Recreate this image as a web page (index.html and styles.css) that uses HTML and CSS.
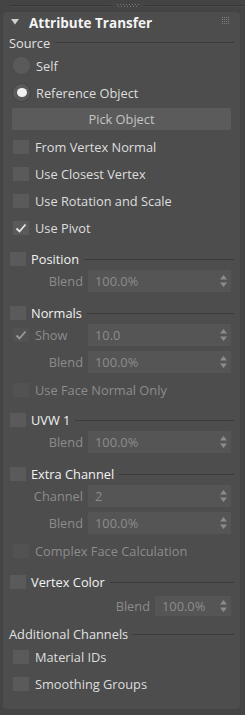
FILE: index.html
```html
<!DOCTYPE html>
<html>
<head>
<meta charset="utf-8">
<link rel="stylesheet" href="styles.css">
</head>
<body>
<div class="topbar">
  <div class="tline"></div>
  <svg class="grip" width="22" height="4" viewBox="0 0 22 4">
    <g fill="#7a7a7a">
      <rect x="0" y="0" width="1" height="1"/><rect x="3" y="0" width="1" height="1"/><rect x="6" y="0" width="1" height="1"/><rect x="9" y="0" width="1" height="1"/><rect x="12" y="0" width="1" height="1"/><rect x="15" y="0" width="1" height="1"/><rect x="18" y="0" width="1" height="1"/><rect x="21" y="0" width="1" height="1"/>
      <rect x="1" y="2" width="1" height="1"/><rect x="4" y="2" width="1" height="1"/><rect x="7" y="2" width="1" height="1"/><rect x="10" y="2" width="1" height="1"/><rect x="13" y="2" width="1" height="1"/><rect x="16" y="2" width="1" height="1"/><rect x="19" y="2" width="1" height="1"/>
    </g>
  </svg>
  <div class="tline"></div>
</div>

<div class="panel">
  <div class="rhead">
    <svg class="tri" width="8" height="6" viewBox="0 0 8 6"><path d="M0 0H8L4 5.5Z" fill="#cfcfcf"/></svg>
    <span class="rtitle">Attribute Transfer</span>
    <svg class="gridicon" width="8" height="8" viewBox="0 0 8 8">
      <g fill="#7c7c7c">
        <rect x="0" y="0" width="1" height="1"/><rect x="2" y="0" width="1" height="1"/><rect x="4" y="0" width="1" height="1"/><rect x="6" y="0" width="1" height="1"/>
        <rect x="0" y="2" width="1" height="1"/><rect x="2" y="2" width="1" height="1"/><rect x="4" y="2" width="1" height="1"/><rect x="6" y="2" width="1" height="1"/>
        <rect x="0" y="4" width="1" height="1"/><rect x="2" y="4" width="1" height="1"/><rect x="4" y="4" width="1" height="1"/><rect x="6" y="4" width="1" height="1"/>
        <rect x="0" y="6" width="1" height="1"/><rect x="2" y="6" width="1" height="1"/><rect x="4" y="6" width="1" height="1"/><rect x="6" y="6" width="1" height="1"/>
      </g>
    </svg>
  </div>

  <div class="gtitle"><span>Source</span><i class="rule"></i></div>
  <div class="row"><span class="radio"></span><span class="lbl">Self</span></div>
  <div class="row"><span class="radio on"></span><span class="lbl">Reference Object</span></div>
  <div class="btn">Pick Object</div>
  <div class="row first"><span class="cb"></span><span class="lbl">From Vertex Normal</span></div>
  <div class="row"><span class="cb"></span><span class="lbl">Use Closest Vertex</span></div>
  <div class="row"><span class="cb"></span><span class="lbl">Use Rotation and Scale</span></div>
  <div class="row"><span class="cb"><svg width="12" height="10" viewBox="0 0 12 10"><path d="M1.5 5.5L4.5 8.5L10.5 1.5" fill="none" stroke="#e6e6e6" stroke-width="1.8"/></svg></span><span class="lbl">Use Pivot</span></div>

  <div class="sect m8">
    <div class="stitle"><span class="cb"></span><span class="st">Position</span><i class="rule"></i></div>
    <div class="srow"><span class="slbl">Blend</span><div class="spin"><span>100.0%</span><svg class="arr" width="7" height="12" viewBox="0 0 7 12"><path d="M3.5 0L7 4.5H0Z M3.5 12L7 7.5H0Z" fill="#8c8c8c"/></svg></div></div>
  </div>

  <div class="sect m11">
    <div class="stitle"><span class="cb"></span><span class="st">Normals</span><i class="rule"></i></div>
    <div class="srow"><span class="slbl left"><span class="cb dis"><svg width="12" height="10" viewBox="0 0 12 10"><path d="M1.5 5.5L4.5 8.5L10.5 1.5" fill="none" stroke="#9a9a9a" stroke-width="1.8"/></svg></span><span class="dlbl">Show</span></span><div class="spin"><span>10.0</span><svg class="arr" width="7" height="12" viewBox="0 0 7 12"><path d="M3.5 0L7 4.5H0Z M3.5 12L7 7.5H0Z" fill="#8c8c8c"/></svg></div></div>
    <div class="srow"><span class="slbl">Blend</span><div class="spin"><span>100.0%</span><svg class="arr" width="7" height="12" viewBox="0 0 7 12"><path d="M3.5 0L7 4.5H0Z M3.5 12L7 7.5H0Z" fill="#8c8c8c"/></svg></div></div>
    <div class="row after-spin"><span class="cb dis"></span><span class="dlbl">Use Face Normal Only</span></div>
  </div>

  <div class="sect m7">
    <div class="stitle"><span class="cb"></span><span class="st">UVW 1</span><i class="rule"></i></div>
    <div class="srow"><span class="slbl">Blend</span><div class="spin"><span>100.0%</span><svg class="arr" width="7" height="12" viewBox="0 0 7 12"><path d="M3.5 0L7 4.5H0Z M3.5 12L7 7.5H0Z" fill="#8c8c8c"/></svg></div></div>
  </div>

  <div class="sect m11">
    <div class="stitle"><span class="cb"></span><span class="st">Extra Channel</span><i class="rule"></i></div>
    <div class="srow"><span class="slbl">Channel</span><div class="spin"><span>2</span><svg class="arr" width="7" height="12" viewBox="0 0 7 12"><path d="M3.5 0L7 4.5H0Z M3.5 12L7 7.5H0Z" fill="#8c8c8c"/></svg></div></div>
    <div class="srow"><span class="slbl">Blend</span><div class="spin"><span>100.0%</span><svg class="arr" width="7" height="12" viewBox="0 0 7 12"><path d="M3.5 0L7 4.5H0Z M3.5 12L7 7.5H0Z" fill="#8c8c8c"/></svg></div></div>
    <div class="row after-spin"><span class="cb dis"></span><span class="dlbl">Complex Face Calculation</span></div>
  </div>

  <div class="sect m8">
    <div class="stitle"><span class="cb"></span><span class="st">Vertex Color</span><i class="rule"></i></div>
    <div class="srow narrow"><span class="slbl">Blend</span><div class="spin"><span>100.0%</span><svg class="arr" width="7" height="12" viewBox="0 0 7 12"><path d="M3.5 0L7 4.5H0Z M3.5 12L7 7.5H0Z" fill="#8c8c8c"/></svg></div></div>
  </div>

  <div class="gtitle add"><span>Additional Channels</span><i class="rule"></i></div>
  <div class="row"><span class="cb"></span><span class="lbl">Material IDs</span></div>
  <div class="row"><span class="cb"></span><span class="lbl">Smoothing Groups</span></div>
</div>
</body>
</html>
```

FILE: styles.css
```css
* { box-sizing: border-box; }
html, body {
  margin: 0;
  padding: 0;
}
body {
  width: 245px;
  height: 715px;
  overflow: hidden;
  background: #444444;
  font-family: "Open Sans", "Noto Sans", sans-serif;
  font-size: 12.8px;
  color: #d9d9d9;
}

.topbar {
  display: flex;
  align-items: center;
  height: 12px;
  padding-left: 10px;
  gap: 6px;
}
.tline {
  flex: 1;
  height: 2px;
  border-top: 1px solid #363636;
  border-bottom: 1px solid #4c4c4c;
}
.grip { display: block; }

.panel {
  margin: 0 5px 0 3px;
  background: #4d4d4d;
  border-radius: 4px;
  padding: 0 6px 12px 6px;
}

.rhead {
  height: 21px;
  display: flex;
  align-items: center;
  padding-left: 2px;
}
.tri { display: block; margin-top: -1px; }
.rtitle {
  margin-left: 10px;
  font-weight: 700;
  font-size: 13.5px;
  color: #f4f4f4;
  flex: 1;
}
.gridicon { display: block; margin-right: 4px; margin-top: -3px; }

.gtitle {
  height: 19px;
  display: flex;
  align-items: center;
  color: #e2e2e2;
}
.gtitle.add { margin-top: 9px; height: 18px; }
.rule {
  flex: 1;
  height: 1px;
  background: #3a3a3a;
  margin-left: 5px;
}

.row {
  height: 27px;
  display: flex;
  align-items: center;
  padding-left: 4px;
}
.row.first, .row.after-spin { margin-top: 3px; }

.radio {
  width: 17px;
  height: 17px;
  border-radius: 50%;
  background: #5a5a5a;
  display: flex;
  align-items: center;
  justify-content: center;
  flex: none;
}
.radio.on { background: #5a5a5a; box-shadow: 0 0 0 1px #464646; }
.radio.on::after {
  content: "";
  width: 10px;
  height: 9px;
  border-radius: 50%;
  background: #f2f2f2;
}
.lbl { margin-left: 6px; color: #dedede; }
.dlbl { margin-left: 6px; color: #8c8c8c; }

.btn {
  margin: 2px 3px 0 3px;
  height: 22px;
  background: #5b5b5b;
  border-radius: 2px;
  color: #c4c4c4;
  display: flex;
  align-items: center;
  justify-content: center;
}

.cb {
  width: 16px;
  height: 14px;
  background: #5a5a5a;
  flex: none;
  display: flex;
  align-items: center;
  justify-content: center;
}
.cb.dis { background: #525252; }
.cb svg { display: block; }

.sect.m7 { margin-top: 7px; }
.sect.m8 { margin-top: 8px; }
.sect.m11 { margin-top: 11px; }

.stitle {
  height: 20px;
  display: flex;
  align-items: center;
  padding-left: 1px;
}
.st { margin-left: 5px; color: #f2f2f2; }

.srow {
  display: flex;
  align-items: center;
  margin-top: 5px;
  padding-right: 3px;
}
.stitle + .srow { margin-top: 1px; }
.slbl {
  width: 74px;
  text-align: right;
  color: #8c8c8c;
  flex: none;
}
.slbl.left {
  display: flex;
  align-items: center;
  text-align: left;
  padding-left: 4px;
}
.spin {
  margin-left: 5px;
  flex: 1;
  height: 22px;
  background: #555555;
  display: flex;
  align-items: center;
  justify-content: space-between;
  padding: 0 4px 0 7px;
  color: #8c8c8c;
}
.arr { display: block; }
.srow.narrow { justify-content: flex-end; }
.stitle + .srow.narrow { margin-top: 4px; }
.srow.narrow .slbl { width: auto; }
.srow.narrow .spin { flex: none; width: 76px; height: 20px; }
```
